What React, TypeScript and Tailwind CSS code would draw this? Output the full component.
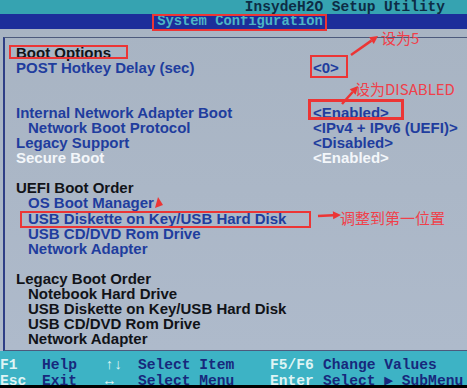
import React from "react";

type Tone = "blue" | "black" | "white";
type Row = { label?: string; value?: string; indent?: boolean; tone?: Tone };

const rows: Row[] = [
  { label: "Boot Options", tone: "black" },
  { label: "POST Hotkey Delay (sec)", value: "<0>" },
  {},
  {},
  { label: "Internal Network Adapter Boot", value: "<Enabled>" },
  { label: "Network Boot Protocol", value: "<IPv4 + IPv6 (UEFI)>", indent: true },
  { label: "Legacy Support", value: "<Disabled>" },
  { label: "Secure Boot", value: "<Enabled>", tone: "white" },
  {},
  { label: "UEFI Boot Order", tone: "black" },
  { label: "OS Boot Manager", indent: true },
  { label: "USB Diskette on Key/USB Hard Disk", indent: true },
  { label: "USB CD/DVD Rom Drive", indent: true },
  { label: "Network Adapter", indent: true },
  {},
  { label: "Legacy Boot Order", tone: "black" },
  { label: "Notebook Hard Drive", indent: true, tone: "black" },
  { label: "USB Diskette on Key/USB Hard Disk", indent: true, tone: "black" },
  { label: "USB CD/DVD Rom Drive", indent: true, tone: "black" },
  { label: "Network Adapter", indent: true, tone: "black" },
];

const toneClass: Record<Tone, string> = {
  blue: "text-[#1f3d9e]",
  black: "text-[#111318]",
  white: "text-[#f3f6fa]",
};

// footer: key / description pairs, two lines
const footer = [
  ["F1", "Help", "↑↓", "Select Item", "F5/F6", "Change Values"],
  ["Esc", "Exit", "↔", "Select Menu", "Enter", "Select ▶ SubMenu"],
];

// red annotation arrow: line plus filled head
const Arrow = ({ x1, y1, x2, y2 }: { x1: number; y1: number; x2: number; y2: number }) => {
  const a = Math.atan2(y2 - y1, x2 - x1);
  const len = 8;
  const w = 4;
  const bx = x2 - len * Math.cos(a);
  const by = y2 - len * Math.sin(a);
  const p1 = `${bx + w * Math.sin(a)},${by - w * Math.cos(a)}`;
  const p2 = `${bx - w * Math.sin(a)},${by + w * Math.cos(a)}`;
  return (
    <g>
      <line x1={x1} y1={y1} x2={bx} y2={by} stroke="#ec3535" strokeWidth={2.5} />
      <polygon points={`${x2},${y2} ${p1} ${p2}`} fill="#ec3535" />
    </g>
  );
};

export default function App() {
  return (
    <div className="relative w-[467px] h-[388px] overflow-hidden flex flex-col bg-[#aab6c5] font-['Liberation_Sans',Arial,sans-serif]">
      {/* top title bar */}
      <div className="h-[14px] bg-[#36a3b1] flex items-center justify-end pr-[22px]">
        <span className="font-['Liberation_Mono',monospace] font-bold text-[14.5px] leading-none text-[#0d2c45]">
          InsydeH2O Setup Utility
        </span>
      </div>

      {/* menu bar */}
      <div className="h-[15px] bg-[#1c2e9a] flex items-center justify-center pl-[13px]">
        <span className="font-['Liberation_Mono',monospace] font-bold text-[13.8px] leading-none text-[#4cb6c6]">
          System Configuration
        </span>
      </div>

      {/* main panel */}
      <div className="flex-1 pt-[8px] bg-gradient-to-b from-[#a8b4c3] to-[#aebacb]">
        <div className="h-full ml-[3px] border-t border-b border-l-2 border-t-[#4c5a7c] border-b-[#4c5a7c] border-l-[#2f3f86] pt-[6.5px] pl-[11px]">
          {rows.map((r, i) => (
            <div
              key={i}
              className={`h-[15.1px] grid grid-cols-[297px_1fr] items-center font-bold text-[15px] leading-[15px] whitespace-nowrap ${toneClass[r.tone ?? "blue"]}`}
            >
              <span className={r.indent ? "pl-[12px]" : ""}>{r.label}</span>
              <span>{r.value}</span>
            </div>
          ))}
        </div>
      </div>

      {/* help footer */}
      <div className="h-[34px] bg-[#3db3c5] pt-[6px] overflow-hidden font-['Liberation_Mono',monospace] font-bold text-[14.6px] leading-none">
        {footer.map((line, i) => (
          <div key={i} className="h-[16px] grid grid-cols-[42px_63px_33px_132px_53px_1fr] items-center whitespace-nowrap">
            {line.map((t, j) => (
              <span key={j} className={j % 2 === 0 ? "text-[#dff4f4]" : "text-[#17287c]"}>
                {t}
              </span>
            ))}
          </div>
        ))}
      </div>
      <div className="h-[3px] bg-black" />

      {/* red annotations drawn over the screenshot */}
      <div className="absolute inset-0 pointer-events-none">
        <div className="absolute left-[152px] top-[14px] w-[175px] h-[17px] border-2 border-[#ec3535]" />
        <div className="absolute left-[9px] top-[45px] w-[119px] h-[14px] border-2 border-[#ec3535]" />
        <div className="absolute left-[310px] top-[55px] w-[38px] h-[23px] border-2 border-[#ec3535]" />
        <div className="absolute left-[308px] top-[99px] w-[96px] h-[21px] border-[3px] border-[#ec3535]" />
        <div className="absolute left-[20px] top-[211px] w-[291px] h-[17px] border-2 border-[#ec3535]" />

        <span className="absolute left-[381px] top-[30px] text-[15px] leading-none text-[#f0404a] font-['Noto_Sans_CJK_SC',sans-serif]">
          设为5
        </span>
        <span className="absolute left-[355px] top-[81px] text-[15px] leading-none text-[#f0404a] font-['Noto_Sans_CJK_SC',sans-serif]">
          设为DISABLED
        </span>
        <span className="absolute left-[340px] top-[210px] text-[15px] leading-none text-[#f0404a] font-['Noto_Sans_CJK_SC',sans-serif]">
          调整到第一位置
        </span>

        <svg className="absolute inset-0" width="467" height="388" viewBox="0 0 467 388">
          <Arrow x1={351} y1={55} x2={378} y2={36} />
          <Arrow x1={342} y1={104} x2={358} y2={86} />
          <Arrow x1={318} y1={216} x2={341} y2={215} />
          <polygon points="155,208 158,197 163,205" fill="#ec3535" />
        </svg>
      </div>
    </div>
  );
}
